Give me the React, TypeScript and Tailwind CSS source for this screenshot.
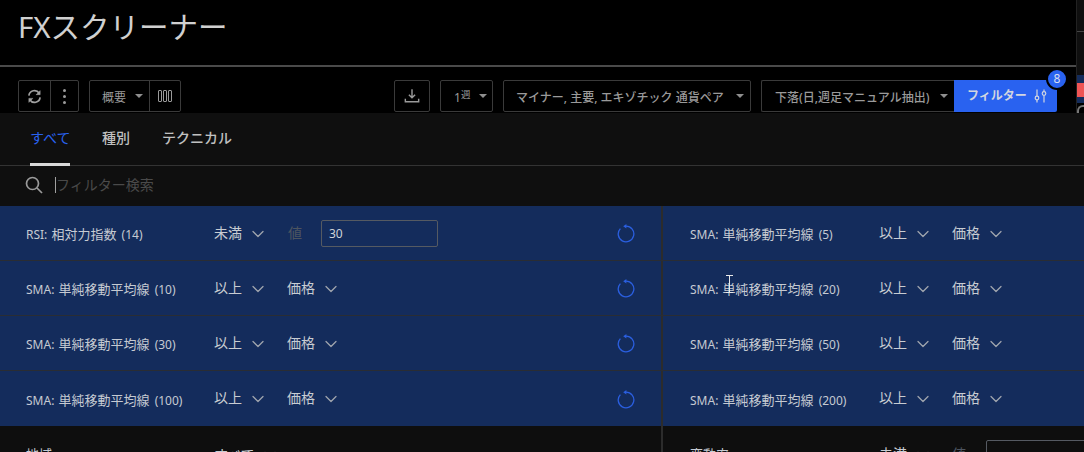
import React from "react";
import { ChevronDown } from "lucide-react";

const font = "font-['Noto_Sans','Noto_Sans_CJK_JP',sans-serif]";

function Caret() {
  return <span className="shrink-0 w-0 h-0 border-x-[4px] border-x-transparent border-t-[4px] border-t-[#8f8f8f]" />;
}

function Chevron() {
  return <ChevronDown className="ml-[6px] mt-[2px] w-[20px] h-[20px] text-[#a0a5ae]" strokeWidth={1.5} />;
}

function Select({ label }: { label: string }) {
  return (
    <div className="flex items-center">
      <span className="text-[14px] leading-5 text-[#c8ccd2] w-[28px] whitespace-nowrap">{label}</span>
      <Chevron />
    </div>
  );
}

function Reset() {
  return (
    <svg width="20" height="20" viewBox="0 0 20 20" fill="none" className="text-[#2b5fe0]">
      <path d="M10 3.2 A7.8 7.8 0 1 1 4.4 5.6" stroke="currentColor" strokeWidth="1.3" fill="none" />
      <path d="M7.2 3.2 L10.4 1 L10.4 5.4 Z" fill="currentColor" />
    </svg>
  );
}

function Name({ pre, cjk, post }: { pre: string; cjk: string; post: string }) {
  return (
    <span className="text-[12px] text-[#c5cad2] whitespace-nowrap [word-spacing:1px]">
      {pre} <span className="text-[13px] mr-[1px]">{cjk}</span> {post}
    </span>
  );
}

type RowProps = { pre: string; cjk: string; post: string; rightPost: string; op?: string; value?: boolean; last?: boolean };

function Row({ pre, cjk, post, rightPost, op = "以上", value, last }: RowProps) {
  return (
    <div className={`flex h-[55px] bg-[#142c5c] ${last ? "" : "border-b border-[#2a2d33]"}`}>
      <div className="w-[661px] flex items-center pl-[26px] pr-[25px] shrink-0">
        <div className="w-[188px] leading-none"><Name pre={pre} cjk={cjk} post={post} /></div>
        <div className="flex items-center flex-1 -mt-[1px]">
          <div className="w-[73px]"><Select label={op} /></div>
          {value ? (
            <>
              <span className="text-[14px] text-[#4d5560] w-[34px] pl-[1px]">値</span>
              <div className="w-[117px] h-[27px] mt-[2px] border border-[#555a62] rounded-[2px] text-[12px] text-[#d0d3d8] pl-[7px] flex items-center">30</div>
            </>
          ) : (
            <Select label="価格" />
          )}
          <div className="ml-auto mt-[1px]"><Reset /></div>
        </div>
      </div>
      <div className="w-[2px] bg-[#2c2c2c] shrink-0" />
      <div className="flex items-center pl-[27px] flex-1">
        <div className="w-[189px] leading-none"><Name pre="SMA:" cjk="単純移動平均線" post={rightPost} /></div>
        <div className="flex items-center -mt-[1px]">
          <div className="w-[73px]"><Select label="以上" /></div>
          <Select label="価格" />
        </div>
      </div>
    </div>
  );
}

export default function App() {
  return (
    <div className={`relative w-[1084px] h-[452px] overflow-hidden bg-black ${font} flex flex-col`}>
      <div className="flex shrink-0 h-[113px]">
        <div className="w-[1076px] shrink-0 flex flex-col">
          <div className="h-[67px] pl-[18px] pt-[8px] border-b-2 border-[#4a4a4a] shrink-0">
            <h1 className="text-[29.5px] leading-[38px] text-[#d0d0d0]">FXスクリーナー</h1>
          </div>
          <div className="flex items-start pt-[13px] pl-[18px] pr-[19px]">
            <div className="flex h-[32px] w-[61px] border border-[#3a3a3a] rounded-[2px]">
              <div className="w-[32px] border-r border-[#3a3a3a] flex items-center justify-center">
                <svg width="15" height="15" viewBox="0 0 16 16" fill="none" stroke="#a0a0a0" strokeWidth="1.8">
                  <path d="M2 7 A6 6 0 0 1 13 4.5" /><path d="M14 1.5 V6 H9.5" fill="#a0a0a0" strokeWidth="0.6" />
                  <path d="M14 9 A6 6 0 0 1 3 11.5" /><path d="M2 14.5 V10 H6.5" fill="#a0a0a0" strokeWidth="0.6" />
                </svg>
              </div>
              <div className="flex-1 flex flex-col items-center justify-center gap-[3px]">
                <span className="w-[3px] h-[3px] rounded-full bg-[#9a9a9a]" />
                <span className="w-[3px] h-[3px] rounded-full bg-[#9a9a9a]" />
                <span className="w-[3px] h-[3px] rounded-full bg-[#9a9a9a]" />
              </div>
            </div>
            <div className="flex h-[32px] w-[92px] ml-[10px] border border-[#3a3a3a] rounded-[2px]">
              <div className="w-[60px] border-r border-[#3a3a3a] flex items-center pl-[12px] gap-[9px] whitespace-nowrap">
                <span className="text-[12px] text-[#9a9a9a] pt-[4px]">概要</span>
                <Caret />
              </div>
              <div className="flex-1 flex items-center justify-center gap-[1px]">
                <span className="w-[4px] h-[12px] border border-[#9a9a9a] rounded-[1px]" />
                <span className="w-[4px] h-[12px] border border-[#9a9a9a] rounded-[1px]" />
                <span className="w-[4px] h-[12px] border border-[#9a9a9a] rounded-[1px]" />
              </div>
            </div>
            <div className="ml-auto flex">
              <div className="h-[32px] w-[36px] border border-[#3a3a3a] rounded-[2px] flex items-center justify-center">
                <svg width="16" height="16" viewBox="0 0 18 18" fill="none" stroke="#9a9a9a" strokeWidth="1.6">
                  <path d="M9 1.5 V11 M5.5 7.5 L9 11 L12.5 7.5 M1.5 12 V15.5 H16.5 V12" />
                </svg>
              </div>
              <div className="h-[32px] w-[53px] ml-[10px] border border-[#3a3a3a] rounded-[2px] flex items-center pl-[13px] gap-[9px]">
                <span className="text-[12px] text-[#9a9a9a] whitespace-nowrap pt-[2px] leading-none">1<span className="text-[9.5px] align-[4px]">週</span></span>
                <Caret />
              </div>
              <div className="h-[32px] w-[248px] ml-[10px] border border-[#3a3a3a] rounded-[2px] flex items-center pl-[12px] gap-[8px] whitespace-nowrap">
                <span className="text-[12px] text-[#9a9a9a] font-medium w-[212px] pt-[4px]">マイナー, 主要, エキゾチック 通貨ペア</span>
                <Caret />
              </div>
              <div className="h-[32px] w-[193px] ml-[10px] border border-[#3a3a3a] border-r-0 rounded-l-[2px] flex items-center pl-[13px] gap-[8px] whitespace-nowrap">
                <span className="text-[12px] text-[#9a9a9a] font-medium w-[157px] pt-[4px]">下落(日,週足マニュアル抽出)</span>
                <Caret />
              </div>
              <div className="relative h-[32px] w-[103px] bg-[#2962f0] rounded-r-[2px] flex items-center pl-[13px] gap-[7px] whitespace-nowrap">
                <span className="text-[12px] font-bold text-[#d2d6e0]">フィルター</span>
                <svg width="13" height="14" viewBox="0 0 13 14" fill="none" stroke="#d2d6e0" strokeWidth="1.2">
                  <path d="M3 0.5 V7 M3 11 V13.5 M10 0.5 V2.5 M10 6.5 V13.5" />
                  <circle cx="3" cy="9" r="1.8" /><circle cx="10" cy="4.5" r="1.8" />
                </svg>
                <span className="absolute -top-[12px] -right-[11px] w-[22px] h-[22px] border-[2px] border-black rounded-full bg-[#2962f0] text-[#d8def0] text-[12px] flex items-center justify-center">8</span>
              </div>
            </div>
          </div>
        </div>
        <div className="w-[1px] bg-[#222] shrink-0" />
        <div className="flex-1 flex flex-col">
          <div className="h-[31px] bg-[#0f0f0f]" />
          <div className="h-[1px] bg-[#444]" />
          <div className="h-[43px] bg-[#0f0f0f]" />
          <div className="h-[8px] bg-[#142c5c]" />
          <div className="h-[14px] bg-[#f05555]" />
          <div className="h-[6px] bg-[#142c5c]" />
          <div className="flex-1 pt-[2px]">
            <div className="h-full border-2 border-r-0 border-b-0 border-[#777] rounded-tl-[6px]" />
          </div>
        </div>
      </div>
      <div className="flex-1 bg-[#0f0f0f] flex flex-col">
        <div className="h-[53px] border-b border-[#333] flex pl-[30px] gap-[32px] text-[14px] shrink-0">
          <div className="relative h-[52px] flex items-center pb-[3px] text-[#2962f0] w-[40px] whitespace-nowrap">
            すべて<span className="absolute bottom-[-1px] left-0 right-0 h-[3px] bg-[#d8d8d8]" />
          </div>
          <div className="h-[52px] flex items-center pb-[3px] text-[#c0c0c0] font-medium whitespace-nowrap">種別</div>
          <div className="h-[52px] flex items-center pb-[3px] text-[#c0c0c0] font-medium whitespace-nowrap">テクニカル</div>
        </div>
        <div className="h-[40px] flex items-center pl-[25px] pb-[3px] shrink-0">
          <svg width="18" height="18" viewBox="0 0 18 18" fill="none" stroke="#9a9a9a" strokeWidth="1.7">
            <circle cx="7.5" cy="7.5" r="6" /><path d="M12 12 L17 17" />
          </svg>
          <span className="ml-[12px] w-[1px] h-[16px] bg-[#a0a0a0]" />
          <span className="text-[14px] text-[#4a4a4a]">フィルター検索</span>
        </div>
        <Row pre="RSI:" cjk="相対力指数" post="(14)" rightPost="(5)" op="未満" value />
        <Row pre="SMA:" cjk="単純移動平均線" post="(10)" rightPost="(20)" />
        <Row pre="SMA:" cjk="単純移動平均線" post="(30)" rightPost="(50)" />
        <Row pre="SMA:" cjk="単純移動平均線" post="(100)" rightPost="(200)" last />
        <div className="flex h-[55px] bg-[#0e0e0e]">
          <div className="w-[661px] flex pl-[26px] pt-[18px] shrink-0">
            <div className="w-[188px] text-[13px] leading-5 text-[#c5cad2]">地域</div>
            <div className="flex items-center h-[20px] text-[14px] text-[#c8ccd2] whitespace-nowrap">すべて<Chevron /></div>
          </div>
          <div className="w-[2px] bg-[#2c2c2c] shrink-0" />
          <div className="flex pl-[27px] pt-[18px] flex-1">
            <div className="w-[189px] text-[13px] leading-5 text-[#c5cad2]">変動率</div>
            <div className="w-[73px] flex items-center h-[20px]"><Select label="未満" /></div>
            <span className="text-[14px] leading-5 text-[#4d5560] w-[34px]">値</span>
            <div className="w-[117px] h-[27px] border border-[#555a62] rounded-[2px] -mt-[4px] shrink-0" />
          </div>
        </div>
      </div>
      <svg width="9" height="18" viewBox="0 0 9 18" className="absolute left-[725px] top-[275px]" fill="none" stroke="#e8e8e8" strokeWidth="1">
        <path d="M1 0.5 H8 M4.5 0.5 V17 M1 17.5 H8" />
      </svg>
    </div>
  );
}
